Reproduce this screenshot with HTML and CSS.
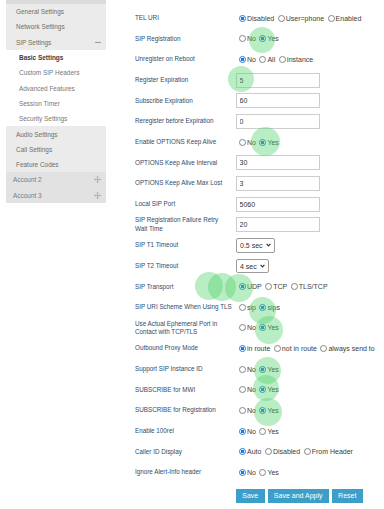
FILE: index.html
```html
<!DOCTYPE html>
<html>
<head>
<meta charset="utf-8">
<title>SIP Settings</title>
<link rel="stylesheet" href="styles.css">
</head>
<body>
<div class="page">
  <nav class="side">
    <div class="side-top"></div>
    <div class="grp">
      <div class="item">General Settings</div>
      <div class="item">Network Settings</div>
      <div class="item">SIP Settings<span class="minus"></span></div>
    </div>
    <div class="sub">
      <div class="item active">Basic Settings</div>
      <div class="item">Custom SIP Headers</div>
      <div class="item">Advanced Features</div>
      <div class="item">Session Timer</div>
      <div class="item">Security Settings</div>
    </div>
    <div class="grp">
      <div class="item">Audio Settings</div>
      <div class="item">Call Settings</div>
      <div class="item">Feature Codes</div>
    </div>
    <div class="item acct">Account 2<svg class="move" width="7" height="7" viewBox="0 0 14 14"><path d="M7 2v10M2 7h10" stroke="#a8a8a8" stroke-width="1.4"/><path d="M7 0l-2.6 3h5.2zM7 14l-2.6-3h5.2zM0 7l3-2.6v5.2zM14 7l-3-2.6v5.2z" fill="#a8a8a8"/></svg></div>
    <div class="item acct">Account 3<svg class="move" width="7" height="7" viewBox="0 0 14 14"><path d="M7 2v10M2 7h10" stroke="#a8a8a8" stroke-width="1.4"/><path d="M7 0l-2.6 3h5.2zM7 14l-2.6-3h5.2zM0 7l3-2.6v5.2zM14 7l-3-2.6v5.2z" fill="#a8a8a8"/></svg></div>
  </nav>

  <main class="form">
    <div class="row"><div class="lbl">TEL URI</div><div class="ctl">
      <label class="opt"><input type="radio" name="tel" checked>Disabled</label>
      <label class="opt"><input type="radio" name="tel">User=phone</label>
      <label class="opt"><input type="radio" name="tel">Enabled</label>
    </div></div>
    <div class="row"><div class="lbl">SIP Registration</div><div class="ctl">
      <label class="opt"><input type="radio" name="reg">No</label>
      <label class="opt"><input type="radio" name="reg" checked>Yes</label>
    </div></div>
    <div class="row"><div class="lbl">Unregister on Reboot</div><div class="ctl">
      <label class="opt"><input type="radio" name="unreg" checked>No</label>
      <label class="opt"><input type="radio" name="unreg">All</label>
      <label class="opt"><input type="radio" name="unreg">Instance</label>
    </div></div>
    <div class="row"><div class="lbl">Register Expiration</div><div class="ctl"><input class="txt" type="text" value="5"></div></div>
    <div class="row"><div class="lbl">Subscribe Expiration</div><div class="ctl"><input class="txt" type="text" value="60"></div></div>
    <div class="row"><div class="lbl">Reregister before Expiration</div><div class="ctl"><input class="txt" type="text" value="0"></div></div>
    <div class="row"><div class="lbl">Enable OPTIONS Keep Alive</div><div class="ctl">
      <label class="opt"><input type="radio" name="ka">No</label>
      <label class="opt"><input type="radio" name="ka" checked>Yes</label>
    </div></div>
    <div class="row"><div class="lbl">OPTIONS Keep Alive Interval</div><div class="ctl"><input class="txt" type="text" value="30"></div></div>
    <div class="row"><div class="lbl">OPTIONS Keep Alive Max Lost</div><div class="ctl"><input class="txt" type="text" value="3"></div></div>
    <div class="row"><div class="lbl">Local SIP Port</div><div class="ctl"><input class="txt" type="text" value="5060"></div></div>
    <div class="row"><div class="lbl">SIP Registration Failure Retry<br>Wait Time</div><div class="ctl"><input class="txt" type="text" value="20"></div></div>
    <div class="row"><div class="lbl">SIP T1 Timeout</div><div class="ctl">
      <span class="sel"><select><option>0.5 sec</option></select><svg width="5" height="4" viewBox="0 0 5 4"><path d="M0.6 0.8L2.5 2.8L4.4 0.8" fill="none" stroke="#333" stroke-width="1.2"/></svg></span>
    </div></div>
    <div class="row"><div class="lbl">SIP T2 Timeout</div><div class="ctl">
      <span class="sel"><select><option>4 sec</option></select><svg width="5" height="4" viewBox="0 0 5 4"><path d="M0.6 0.8L2.5 2.8L4.4 0.8" fill="none" stroke="#333" stroke-width="1.2"/></svg></span>
    </div></div>
    <div class="row"><div class="lbl">SIP Transport</div><div class="ctl">
      <label class="opt"><input type="radio" name="tr" checked>UDP</label>
      <label class="opt"><input type="radio" name="tr">TCP</label>
      <label class="opt"><input type="radio" name="tr">TLS/TCP</label>
    </div></div>
    <div class="row"><div class="lbl">SIP URI Scheme When Using TLS</div><div class="ctl">
      <label class="opt"><input type="radio" name="sch">sip</label>
      <label class="opt"><input type="radio" name="sch" checked>sips</label>
    </div></div>
    <div class="row"><div class="lbl">Use Actual Ephemeral Port in<br>Contact with TCP/TLS</div><div class="ctl">
      <label class="opt"><input type="radio" name="eph">No</label>
      <label class="opt"><input type="radio" name="eph" checked>Yes</label>
    </div></div>
    <div class="row"><div class="lbl">Outbound Proxy Mode</div><div class="ctl">
      <label class="opt"><input type="radio" name="obp" checked>in route</label>
      <label class="opt"><input type="radio" name="obp">not in route</label>
      <label class="opt"><input type="radio" name="obp">always send to</label>
    </div></div>
    <div class="row"><div class="lbl">Support SIP Instance ID</div><div class="ctl">
      <label class="opt"><input type="radio" name="inst">No</label>
      <label class="opt"><input type="radio" name="inst" checked>Yes</label>
    </div></div>
    <div class="row"><div class="lbl">SUBSCRIBE for MWI</div><div class="ctl">
      <label class="opt"><input type="radio" name="mwi">No</label>
      <label class="opt"><input type="radio" name="mwi" checked>Yes</label>
    </div></div>
    <div class="row"><div class="lbl">SUBSCRIBE for Registration</div><div class="ctl">
      <label class="opt"><input type="radio" name="sreg">No</label>
      <label class="opt"><input type="radio" name="sreg" checked>Yes</label>
    </div></div>
    <div class="row"><div class="lbl">Enable 100rel</div><div class="ctl">
      <label class="opt"><input type="radio" name="rel" checked>No</label>
      <label class="opt"><input type="radio" name="rel">Yes</label>
    </div></div>
    <div class="row"><div class="lbl">Caller ID Display</div><div class="ctl">
      <label class="opt"><input type="radio" name="cid" checked>Auto</label>
      <label class="opt"><input type="radio" name="cid">Disabled</label>
      <label class="opt"><input type="radio" name="cid">From Header</label>
    </div></div>
    <div class="row"><div class="lbl">Ignore Alert-Info header</div><div class="ctl">
      <label class="opt"><input type="radio" name="alert" checked>No</label>
      <label class="opt"><input type="radio" name="alert">Yes</label>
    </div></div>
    <div class="btns">
      <button class="btn">Save</button>
      <button class="btn">Save and Apply</button>
      <button class="btn">Reset</button>
    </div>
  </main>
</div>

<div class="marks">
  <span class="dot d1"></span>
  <span class="dot d2"></span>
  <span class="dot d3"></span>
  <span class="dot d4"></span>
  <span class="dot d5"></span>
  <span class="dot d6"></span>
  <span class="dot d7"></span>
  <span class="dot d8"></span>
  <span class="dot d9"></span>
  <span class="dot d10"></span>
  <span class="dot d11"></span>
</div>
</body>
</html>
```

FILE: styles.css
```css
html, body {
  margin: 0;
  padding: 0;
  background: #fff;
  overflow: hidden;
}
body {
  font-family: "Liberation Sans", Arial, sans-serif;
  width: 384px;
  height: 509px;
  position: relative;
}
.page {
  display: flex;
  align-items: flex-start;
}

/* sidebar */
.side {
  width: 100px;
  margin-left: 6px;
  flex: none;
}
.side-top {
  height: 4px;
  background: #dcdcdc;
}
.item {
  height: 15.3px;
  display: flex;
  align-items: center;
  font-size: 6.45px;
  color: #6e6e6e;
  padding-left: 10px;
  white-space: nowrap;
}
.grp {
  background: #ebebeb;
}
.sub .item {
  padding-left: 13px;
  color: #777;
}
.sub .active {
  color: #3a3a3a;
  font-weight: bold;
}
.acct {
  background: #e2e2e2;
  padding-left: 7px;
  color: #7a7a7a;
}
.minus {
  margin-left: auto;
  margin-right: 5px;
  width: 6px;
  height: 1px;
  background: #9a9a9a;
}
.move {
  margin-left: auto;
  margin-right: 5px;
}

/* form */
.form {
  flex: none;
  margin-left: 29px;
  padding-top: 8px;
}
.row {
  display: flex;
  align-items: center;
  height: 20.65px;
}
.lbl {
  width: 101px;
  flex: none;
  font-size: 6.3px;
  line-height: 8.3px;
  color: #2f4b6b;
  white-space: nowrap;
}
.ctl {
  display: flex;
  align-items: center;
  white-space: nowrap;
  font-size: 7px;
  color: #3c3c3c;
}
.opt {
  display: inline-flex;
  align-items: center;
  margin-right: 3.5px;
}
.opt:first-child {
  margin-left: 3px;
}
.opt input {
  appearance: none;
  -webkit-appearance: none;
  box-sizing: border-box;
  width: 7px;
  height: 7px;
  margin: 0 1px 0 0;
  border: 1px solid #858585;
  border-radius: 50%;
  background: #fff;
}
.opt input:checked {
  border-color: #1f7ad9;
  background: radial-gradient(circle, #1f7ad9 0 1.6px, #fff 2px);
}
.txt {
  box-sizing: border-box;
  width: 84px;
  height: 15px;
  margin: 0;
  padding: 0 2.5px;
  border: 1px solid #cdcdcd;
  font-family: "Liberation Sans", Arial, sans-serif;
  font-size: 7px;
  color: #333;
  outline: none;
}
.sel {
  box-sizing: border-box;
  display: inline-flex;
  align-items: center;
  gap: 3px;
  height: 14.5px;
  padding: 0 3px;
  border: 1px solid #9c9c9c;
  border-radius: 2px;
}
.sel select {
  appearance: none;
  -webkit-appearance: none;
  border: none;
  margin: 0;
  padding: 0;
  background: transparent;
  font-family: "Liberation Sans", Arial, sans-serif;
  font-size: 7px;
  color: #333;
  outline: none;
}
.btns {
  display: flex;
  gap: 3px;
  margin-top: 6px;
  margin-left: 101px;
}
.btn {
  height: 14px;
  padding: 0 6.3px;
  margin: 0;
  border: none;
  background: #3d9fc9;
  color: #fff;
  font-family: "Liberation Sans", Arial, sans-serif;
  font-size: 7px;
}

/* click-highlight overlays */
.marks {
  position: absolute;
  left: 0;
  top: 0;
  width: 384px;
  height: 509px;
  pointer-events: none;
}
.dot {
  position: absolute;
  border-radius: 50%;
  background: rgba(80, 210, 105, 0.4);
}
.d1 { left: 249px; top: 27px; width: 26px; height: 26px; }
.d2 { left: 228px; top: 66px; width: 26px; height: 26px; }
.d3 { left: 251px; top: 126.5px; width: 29px; height: 29px; }
.d4 { left: 194.5px; top: 272px; width: 28px; height: 28px; }
.d5 { left: 208px; top: 273px; width: 28px; height: 28px; }
.d6 { left: 225px; top: 274px; width: 28px; height: 28px; }
.d7 { left: 248.5px; top: 296.5px; width: 27px; height: 27px; }
.d8 { left: 255px; top: 315.5px; width: 28px; height: 28px; }
.d9 { left: 253.5px; top: 356.5px; width: 27px; height: 27px; }
.d10 { left: 252.5px; top: 375px; width: 26px; height: 26px; }
.d11 { left: 254px; top: 398px; width: 28px; height: 28px; }
```
